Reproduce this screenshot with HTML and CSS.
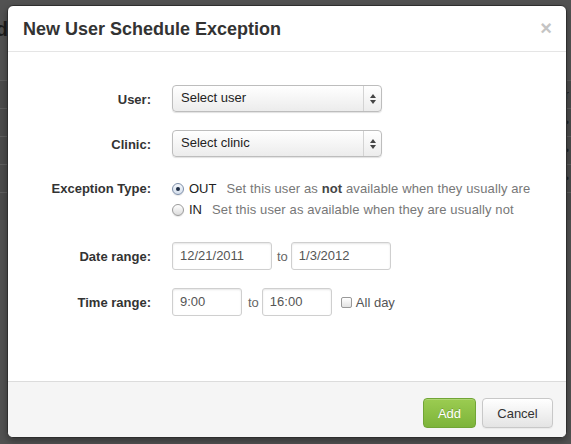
FILE: index.html
```html
<!DOCTYPE html>
<html>
<head>
<meta charset="utf-8">
<link rel="stylesheet" href="styles.css">
</head>
<body>
<div class="page">
  <div class="page-head"><span>Scheduled</span></div>
  <div class="page-table">
    <div class="trow"><span class="tcell">r</span></div>
    <div class="trow"><span class="tcell">•</span></div>
    <div class="trow"><span class="tcell">•</span></div>
    <div class="trow"><span class="tcell">•</span></div>
    <div class="trow"></div>
  </div>
</div>

<div class="modal">
  <div class="modal-header">
    <h3 class="modal-title">New User Schedule Exception</h3>
    <span class="close">×</span>
  </div>
  <div class="modal-body">
    <div class="row row-user">
      <span class="label">User:</span>
      <div class="select"><span class="select-text">Select user</span><span class="select-arrows"><i class="up"></i><i class="down"></i></span></div>
    </div>
    <div class="row row-clinic">
      <span class="label">Clinic:</span>
      <div class="select"><span class="select-text">Select clinic</span><span class="select-arrows"><i class="up"></i><i class="down"></i></span></div>
    </div>
    <div class="row row-type">
      <span class="label">Exception Type:</span>
      <div class="radio-list">
        <div class="radio-item"><span class="radio checked"></span><span class="opt">OUT</span><span class="desc desc-out">Set this user as <b>not</b> available when they usually are</span></div>
        <div class="radio-item"><span class="radio"></span><span class="opt">IN</span><span class="desc desc-in">Set this user as available when they are usually not</span></div>
      </div>
    </div>
    <div class="row row-date">
      <span class="label">Date range:</span>
      <div class="inline">
        <span class="input small">12/21/2011</span>
        <span class="to">to</span>
        <span class="input small">1/3/2012</span>
      </div>
    </div>
    <div class="row row-time">
      <span class="label">Time range:</span>
      <div class="inline">
        <span class="input mini">9:00</span>
        <span class="to to-time">to</span>
        <span class="input mini">16:00</span>
        <span class="checkbox"></span>
        <span class="allday">All day</span>
      </div>
    </div>
  </div>
  <div class="modal-footer">
    <button class="btn btn-add">Add</button>
    <button class="btn btn-cancel">Cancel</button>
  </div>
</div>
</body>
</html>
```

FILE: styles.css
```css
* { box-sizing: border-box; }
html, body { margin: 0; padding: 0; }
body {
  width: 571px;
  height: 444px;
  overflow: hidden;
  background: #525252;
  font-family: "Liberation Sans", Arial, Helvetica, sans-serif;
  position: relative;
}

/* page behind the backdrop */
.page { padding-top: 17px; }
.page-head {
  width: 8px;
  overflow: hidden;
  display: flex;
  justify-content: flex-end;
  font-size: 20px;
  font-weight: bold;
  color: #1c1c1c;
  line-height: 24px;
  height: 24px;
}
.page-head span { white-space: nowrap; }
.page-table { margin-top: 39px; }
.trow {
  height: 28px;
  border-top: 1px solid #5e5e5e;
  background: #4b4b4b;
  display: flex;
  justify-content: flex-end;
  align-items: center;
  padding-right: 2px;
}
.tcell { color: #222; font-size: 12px; }

/* modal */
.modal {
  position: absolute;
  left: 7px;
  top: 5px;
  width: 560px;
  height: 433px;
  background: #fff;
  border: 1px solid #2e2e2e;
  border-radius: 6px;
  box-shadow: 0 3px 7px rgba(0,0,0,0.35);
  display: flex;
  flex-direction: column;
  overflow: hidden;
}
.modal-header {
  height: 46px;
  border-bottom: 1px solid #e5e5e5;
  padding: 0 14px 0 15px;
  display: flex;
  align-items: center;
  justify-content: space-between;
  flex: none;
}
.modal-title {
  margin: 0;
  font-size: 18px;
  font-weight: bold;
  color: #333;
  line-height: 22px;
}
.close {
  font-size: 20px;
  font-weight: bold;
  color: #c4c4c4;
  line-height: 20px;
  margin-top: -1px;
}

.modal-body {
  flex: 1;
  padding-top: 33px;
}
.row {
  display: flex;
  align-items: center;
}
.label {
  width: 143px;
  margin-right: 21px;
  text-align: right;
  font-size: 13px;
  font-weight: bold;
  color: #333;
  flex: none;
}
.row-user .label, .row-clinic .label { padding-top: 2px; }
.row-clinic { margin-top: 18px; }
.row-type { margin-top: 22px; align-items: flex-start; }
.row-type .label { line-height: 20px; }
.row-date { margin-top: 22px; }
.row-time { margin-top: 18px; }

/* select */
.select {
  width: 210px;
  height: 27px;
  border: 1px solid #bdbdbd;
  border-radius: 4px;
  background: linear-gradient(#ffffff, #ececec);
  box-shadow: 0 1px 1px rgba(0,0,0,0.12);
  display: flex;
  align-items: center;
}
.select-text {
  flex: 1;
  padding-left: 8px;
  padding-bottom: 2px;
  font-size: 13px;
  color: #222;
}
.select-arrows {
  width: 18px;
  height: 100%;
  border-left: 1px solid #d3d3d3;
  display: flex;
  flex-direction: column;
  align-items: center;
  justify-content: center;
  gap: 2px;
}
.select-arrows i {
  width: 0;
  height: 0;
  border-left: 3px solid transparent;
  border-right: 3px solid transparent;
}
.select-arrows .up { border-bottom: 4px solid #444; }
.select-arrows .down { border-top: 4px solid #444; }

/* radios */
.radio-list { display: flex; flex-direction: column; }
.radio-item {
  display: flex;
  align-items: center;
  height: 20px;
  font-size: 13px;
  line-height: 20px;
}
.radio-item + .radio-item { margin-top: 1px; }
.radio {
  width: 12px;
  height: 12px;
  border-radius: 50%;
  border: 1px solid #9a9a9a;
  background: linear-gradient(#ffffff, #dcdcdc);
  box-shadow: 0 1px 1px rgba(0,0,0,0.1);
  margin-right: 5px;
  display: flex;
  align-items: center;
  justify-content: center;
}
.radio.checked { border-color: #7d8ea8; background: linear-gradient(#f4f7fb, #d5dfec); }
.radio.checked::after {
  content: "";
  width: 4px;
  height: 4px;
  border-radius: 50%;
  background: #1d2c44;
}
.opt { color: #222; }
.desc { color: #777; margin-left: 10px; letter-spacing: 0.12px; }
.desc b { color: #444; }

/* inputs */
.inline { display: flex; align-items: center; }
.input {
  height: 28px;
  border: 1px solid #cfcfcf;
  border-radius: 3px;
  box-shadow: inset 0 1px 2px rgba(0,0,0,0.1);
  padding-left: 7px;
  padding-bottom: 2px;
  font-size: 13px;
  color: #555;
  display: flex;
  align-items: center;
}
.input.small { width: 100px; }
.input.mini { width: 70px; }
.to {
  font-size: 13px;
  color: #666;
  margin: 0 3px 0 5px;
}
.to-time { margin: 0 3px 0 6px; }
.checkbox {
  width: 11px;
  height: 11px;
  border: 1px solid #999;
  border-radius: 2px;
  background: linear-gradient(#ffffff, #e2e2e2);
  margin-left: 9px;
  margin-right: 4px;
}
.allday { font-size: 13px; color: #555; }

/* footer */
.modal-footer {
  flex: none;
  height: 56px;
  border-top: 1px solid #dcdcdc;
  background: #f5f5f5;
  padding: 16px 13px 0 0;
  display: flex;
  justify-content: flex-end;
  align-items: flex-start;
  gap: 6px;
}
.btn {
  height: 30px;
  border-radius: 4px;
  font-family: "Liberation Sans", Arial, Helvetica, sans-serif;
  font-size: 13px;
  padding: 0;
  cursor: pointer;
}
.btn-add {
  width: 53px;
  color: #fff;
  background: linear-gradient(#9bcc51, #7db43a);
  border: 1px solid #71a536;
  text-shadow: 0 -1px 0 rgba(0,0,0,0.2);
  box-shadow: inset 0 1px 0 rgba(255,255,255,0.2);
}
.btn-cancel {
  width: 71px;
  color: #333;
  background: linear-gradient(#ffffff, #e4e4e4);
  border: 1px solid #c8c8c8;
  box-shadow: inset 0 1px 0 rgba(255,255,255,0.5), 0 1px 1px rgba(0,0,0,0.05);
}
```
